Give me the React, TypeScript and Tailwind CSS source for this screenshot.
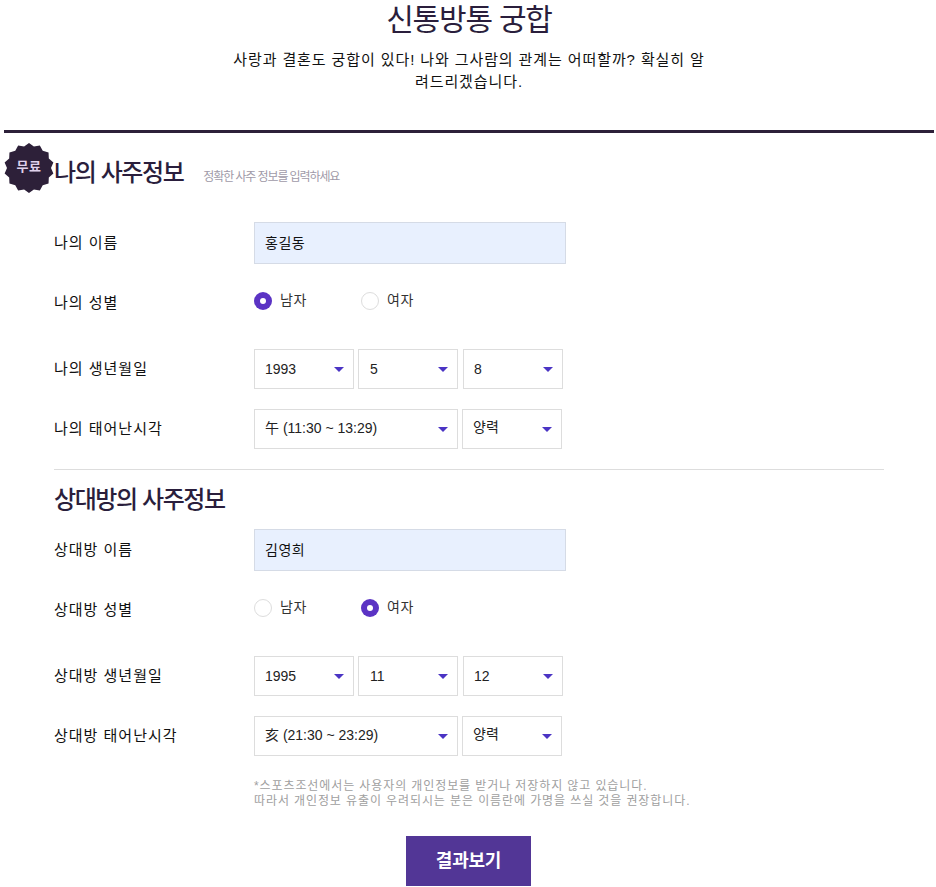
const star = (() => {
  const pts: string[] = [];
  const n = 14;
  for (let i = 0; i < n * 2; i++) {
    const r = i % 2 === 0 ? 25 : 22;
    const a = (Math.PI * i) / n - Math.PI / 2;
    pts.push(`${(25 + r * Math.cos(a)).toFixed(2)},${(25 + r * Math.sin(a)).toFixed(2)}`);
  }
  return pts.join(" ");
})();

function Label({ children, low }: { children: string; low?: boolean }) {
  return (
    <div className={`w-[200px] shrink-0 text-[15px] leading-[22px] text-[#111] tracking-[1px] ${low ? "pt-[4px]" : ""}`}>
      {children}
    </div>
  );
}

function Select({ value, w, up }: { value: string; w: string; up?: string }) {
  return (
    <div className={`${w} h-10 border border-[#dddddd] bg-white flex items-center justify-between pl-[10px] pr-[9px] text-[14px] text-[#222]`}>
      <span className={up}>{value}</span>
      <svg width="10" height="5" viewBox="0 0 10 5">
        <polygon points="0,0 10,0 5,5" fill="#4b34c4" />
      </svg>
    </div>
  );
}

function Radio({ on, label, w }: { on: boolean; label: string; w: string }) {
  return (
    <div className={`${w} flex items-center gap-2`}>
      {on ? (
        <span className="w-[18px] h-[18px] rounded-full bg-[#5b33c4] flex items-center justify-center">
          <span className="w-[6px] h-[6px] rounded-full bg-white" />
        </span>
      ) : (
        <span className="w-[18px] h-[18px] rounded-full border border-[#dddddd] bg-white" />
      )}
      <span className="text-[14px] text-[#333] tracking-[0.5px] pb-[2px]">{label}</span>
    </div>
  );
}

function Person({
  who, name, male, date, time,
}: { who: string; name: string; male: boolean; date: string[]; time: string }) {
  return (
    <div className="flex flex-col pl-[50px]">
      <div className="flex items-center h-[42px]">
        <Label>{`${who} 이름`}</Label>
        <div className="w-[312px] h-[42px] border border-[#d5dbe6] bg-[#e8f0fe] flex items-center pl-[10px] text-[14px] text-[#111] tracking-[0.5px]">
          {name}
        </div>
      </div>
      <div className="flex items-center h-[40px] mt-[17px]">
        <Label low>{`${who} 성별`}</Label>
        <Radio on={male} label="남자" w="w-[107px]" />
        <Radio on={!male} label="여자" w="w-[107px]" />
      </div>
      <div className="flex items-center h-[40px] mt-[28px]">
        <Label>{`${who} 생년월일`}</Label>
        <div className="flex gap-1">
          <Select value={date[0]} w="w-[100px]" />
          <Select value={date[1]} w="w-[100px]" up="pl-px" />
          <div className="ml-px">
            <Select value={date[2]} w="w-[100px]" />
          </div>
        </div>
      </div>
      <div className="flex items-center h-[40px] mt-[20px]">
        <Label>{`${who} 태어난시각`}</Label>
        <div className="flex gap-1">
          <Select value={time} w="w-[204px]" up="pb-[2px]" />
          <Select value="양력" w="w-[100px]" up="pb-[4px]" />
        </div>
      </div>
    </div>
  );
}

export default function App() {
  return (
    <div className="w-[936px] h-[887px] overflow-hidden bg-white px-1 font-['Liberation_Sans','Noto_Sans_CJK_KR',sans-serif]">
      <div className="w-[930px]">
        <h1 className="pt-[1px] text-center text-[30px] leading-[38px] text-[#2a1e3c] font-normal tracking-[-1.2px]">신통방통 궁합</h1>
        <p className="mx-auto mt-[10px] w-[480px] text-center text-[15px] leading-[22px] text-[#111] tracking-[0.9px]">
          사랑과 결혼도 궁합이 있다! 나와 그사람의 관계는 어떠할까? 확실히 알려드리겠습니다.
        </p>
        <div className="mt-[37px] h-[3px] bg-[#2d2039]" />
        <div className="relative h-[89px] pl-[50px] flex items-start pt-[23px]">
          <div className="absolute left-0 top-[10px] w-[50px] h-[50px]">
            <svg width="50" height="50" viewBox="0 0 50 50" className="absolute inset-0">
              <polygon points={star} fill="#2d2039" />
            </svg>
            <span className="absolute inset-0 flex items-center justify-center text-[13px] font-bold text-[#e0d2ec] tracking-[0.5px] pb-[2px]">무료</span>
          </div>
          <span className="text-[24px] leading-[34px] text-[#2a1e3c] font-medium tracking-[-1.4px]">나의 사주정보</span>
          <span className="ml-[20px] mt-[11px] text-[12px] leading-[20px] text-[#a09aa8] tracking-[-1.1px]">정확한 사주 정보를 입력하세요</span>
        </div>
        <Person who="나의" name="홍길동" male date={["1993", "5", "8"]} time="午 (11:30 ~ 13:29)" />
        <div className="ml-[50px] mt-[20px] w-[830px] h-px bg-[#dddddd]" />
        <div className="pl-[50px] mt-[13px] text-[24px] leading-[34px] text-[#2a1e3c] font-medium tracking-[-1.4px]">상대방의 사주정보</div>
        <div className="mt-[12px]">
          <Person who="상대방" name="김영희" male={false} date={["1995", "11", "12"]} time="亥 (21:30 ~ 23:29)" />
        </div>
        <div className="mt-[23px] ml-[250px] text-[12px] leading-[15px] text-[#a0a0a0] tracking-[0.9px]">
          <div>*스포츠조선에서는 사용자의 개인정보를 받거나 저장하지 않고 있습니다.</div>
          <div>따라서 개인정보 유출이 우려되시는 분은 이름란에 가명을 쓰실 것을 권장합니다.</div>
        </div>
        <div className="mt-[27px] flex justify-center pr-px">
          <div className="w-[125px] h-[50px] bg-[#523696] flex items-center justify-center text-[18px] font-bold text-white tracking-[-0.2px]">
            결과보기
          </div>
        </div>
      </div>
    </div>
  );
}
